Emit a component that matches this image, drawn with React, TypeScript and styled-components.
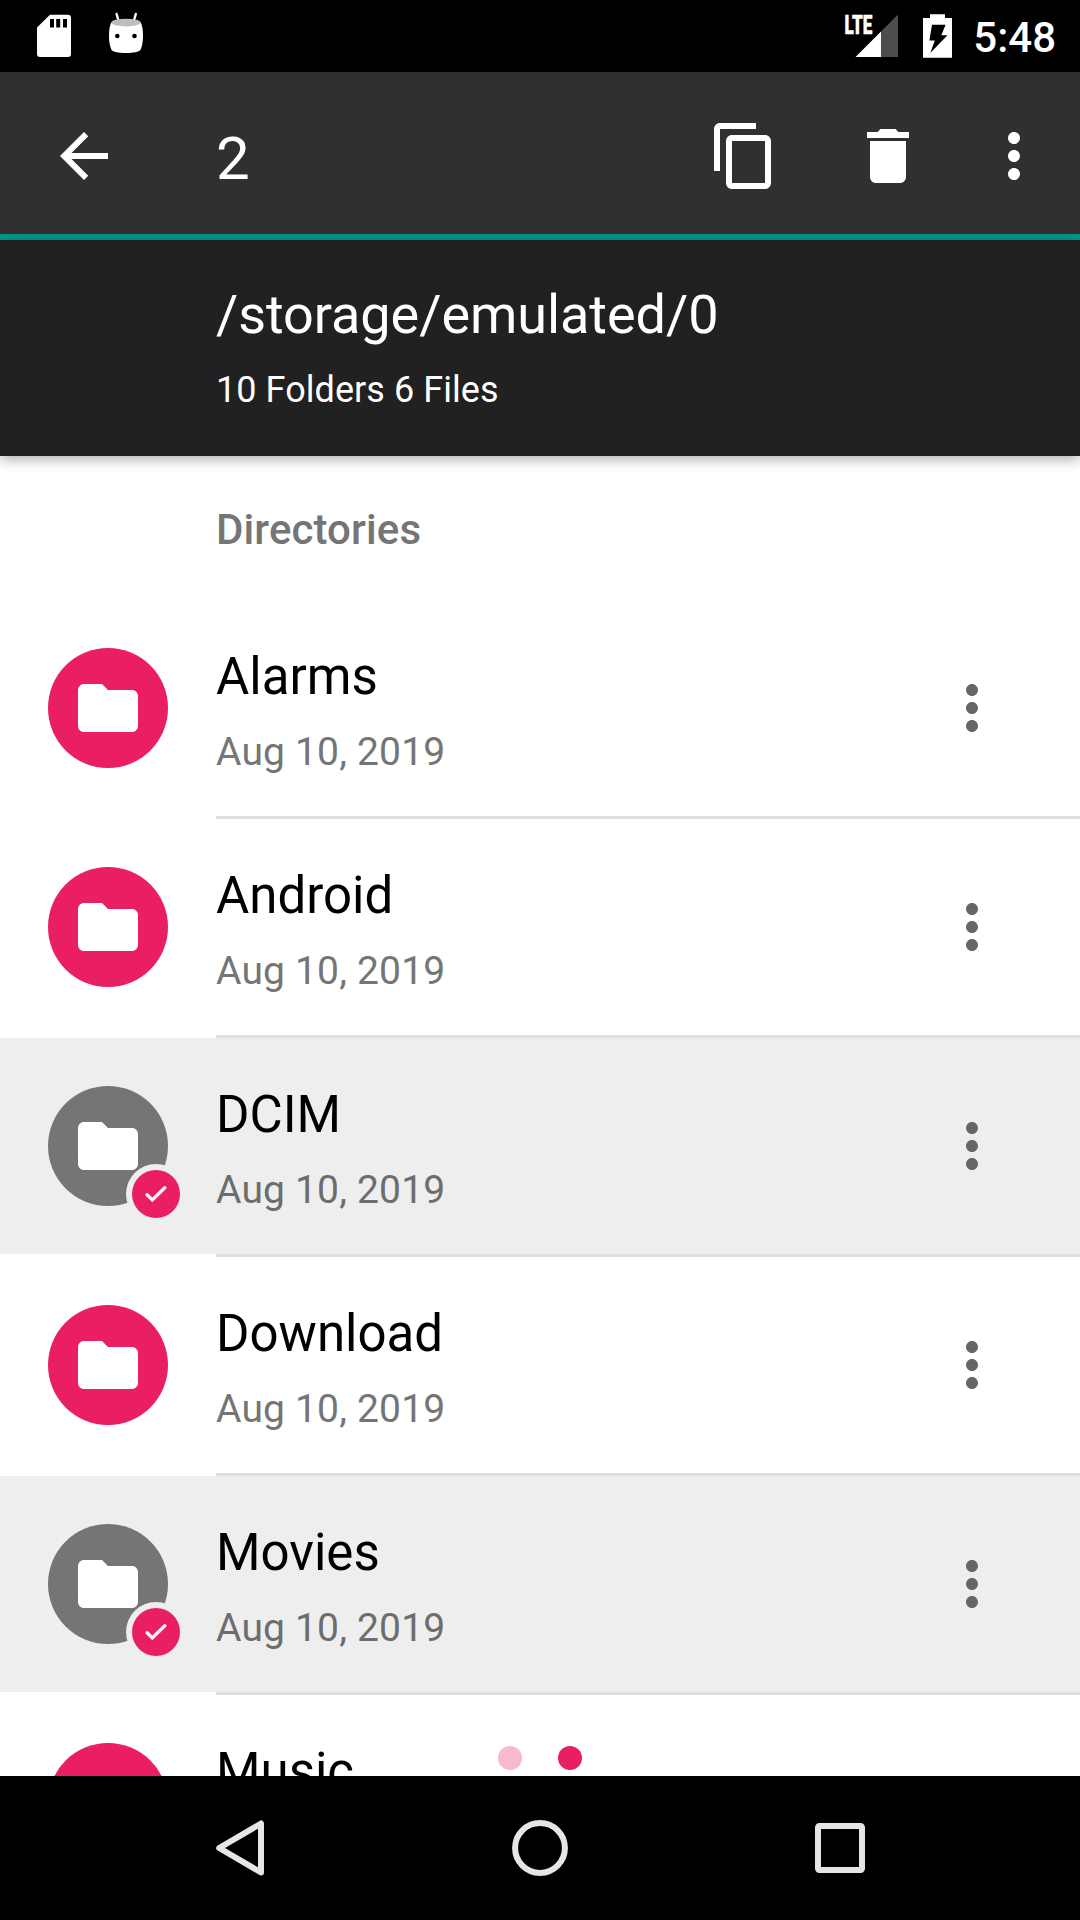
import React from "react";
import styled, { createGlobalStyle } from "styled-components";

const GlobalStyle = createGlobalStyle`
  * { box-sizing: border-box; }
  body { margin: 0; background: #fff; }
  svg { display: block; flex: none; }
`;

const PINK = "#e91e63";

const Screen = styled.div`
  width: 1080px;
  height: 1920px;
  display: flex;
  flex-direction: column;
  overflow: hidden;
  background: #fff;
  font-family: Roboto, "Noto Sans", sans-serif;
`;

const StatusBar = styled.div`
  height: 72px;
  flex: none;
  display: flex;
  align-items: center;
  justify-content: space-between;
  background: #000;
  padding: 0 24px 0 36px;
`;

const StatusGroup = styled.div<{ $gap: number }>`
  display: flex;
  align-items: center;
  gap: ${(p) => p.$gap}px;
`;

const Clock = styled.span`
  margin-left: -4px;
  color: #fff;
  font-size: 42px;
  line-height: 50px;
  font-weight: 500;
  padding-top: 3px;
`;

const Toolbar = styled.header`
  height: 168px;
  flex: none;
  display: flex;
  align-items: center;
  background: #303030;
  border-bottom: 6px solid #009688;
  padding: 6px 30px 0 48px;
`;

const IconButton = styled.button<{ $gapLeft?: number; $color?: string }>`
  width: 72px;
  height: 72px;
  flex: none;
  padding: 0;
  border: 0;
  background: none;
  color: ${(p) => p.$color ?? "#fff"};
  margin-left: ${(p) => p.$gapLeft ?? 0}px;
`;

const SelectionCount = styled.h1`
  flex: 1;
  margin: 0 0 0 96px;
  color: #fff;
  font-size: 60px;
  line-height: 70px;
  font-weight: 400;
  padding-top: 5px;
`;

const PathHeader = styled.section`
  position: relative;
  z-index: 1;
  height: 216px;
  flex: none;
  padding: 43px 0 0 216px;
  background: #212121;
  color: #fff;
  box-shadow: 0 4px 12px rgba(0, 0, 0, 0.3);
`;

const PathTitle = styled.div`
  font-size: 54px;
  line-height: 64px;
  letter-spacing: -0.06px;
`;

const PathSummary = styled.div`
  margin-top: 22px;
  font-size: 36px;
  line-height: 42px;
  letter-spacing: 0.06px;
`;

const Content = styled.main`
  position: relative;
  flex: 1;
  min-height: 0;
  overflow: hidden;
`;

const SectionTitle = styled.h2`
  height: 144px;
  margin: 0;
  padding: 49px 0 0 216px;
  color: #757575;
  font-size: 42px;
  line-height: 50px;
  font-weight: 500;
  letter-spacing: 0.1px;
`;

const Row = styled.div<{ $selected: boolean }>`
  height: 216px;
  display: flex;
  align-items: center;
  padding: 0 72px 0 48px;
  background: ${(p) => (p.$selected ? "#eeeeee" : "#ffffff")};
`;

const Divider = styled.div`
  height: 3px;
  margin-left: 216px;
  background: #e0e0e0;
`;

const Avatar = styled.div<{ $selected: boolean }>`
  position: relative;
  width: 120px;
  height: 120px;
  flex: none;
  display: flex;
  align-items: center;
  justify-content: center;
  border-radius: 50%;
  color: #fff;
  background: ${(p) => (p.$selected ? "#757575" : PINK)};
`;

const CheckBadge = styled.div`
  position: absolute;
  left: 78px;
  top: 78px;
  width: 60px;
  height: 60px;
  border-radius: 50%;
  background: #eee;
  display: flex;
  align-items: center;
  justify-content: center;
`;

const CheckDisc = styled.div`
  width: 48px;
  height: 48px;
  border-radius: 50%;
  background: ${PINK};
  display: flex;
  align-items: center;
  justify-content: center;
`;

const RowText = styled.div`
  flex: 1;
  height: 216px;
  margin-left: 48px;
  padding-top: 47px;
`;

const Name = styled.div`
  color: #000;
  font-size: 51px;
  line-height: 60px;
`;

const DateText = styled.div<{ $selected: boolean }>`
  margin-top: 22px;
  color: ${(p) => (p.$selected ? "#6d6d6d" : "#757575")};
  font-size: 39px;
  line-height: 46px;
  letter-spacing: 0.18px;
`;

const PageDots = styled.div`
  position: absolute;
  left: 0;
  right: 0;
  bottom: 6px;
  display: flex;
  justify-content: center;
  gap: 36px;
`;

const PageDot = styled.span<{ $active: boolean }>`
  width: 24px;
  height: 24px;
  border-radius: 50%;
  background: ${(p) => (p.$active ? PINK : "#f8b9cf")};
`;

const NavBar = styled.nav`
  height: 144px;
  flex: none;
  display: flex;
  justify-content: center;
  background: #000;
`;

const NavButton = styled.button`
  width: 300px;
  height: 144px;
  padding: 0;
  border: 0;
  background: none;
  display: flex;
  align-items: center;
  justify-content: center;
`;

const Icon = ({ d, size = 72 }: { d: string; size?: number }) => (
  <svg width={size} height={size} viewBox="0 0 24 24" fill="currentColor">
    <path d={d} />
  </svg>
);

const ARROW_BACK = "M20 11H7.83l5.59-5.59L12 4l-8 8 8 8 1.41-1.41L7.83 13H20v-2z";
const COPY =
  "M16 1H4c-1.1 0-2 .9-2 2v14h2V3h12V1zm3 4H8c-1.1 0-2 .9-2 2v14c0 1.1.9 2 2 2h11c1.1 0 2-.9 2-2V7c0-1.1-.9-2-2-2zm0 16H8V7h11v14z";
const DELETE = "M6 19c0 1.1.9 2 2 2h8c1.1 0 2-.9 2-2V7H6v12zM19 4h-3.5l-1-1h-5l-1 1H5v2h14V4z";
const MORE =
  "M12 8c1.1 0 2-.9 2-2s-.9-2-2-2-2 .9-2 2 .9 2 2 2zm0 2c-1.1 0-2 .9-2 2s.9 2 2 2 2-.9 2-2-.9-2-2-2zm0 6c-1.1 0-2 .9-2 2s.9 2 2 2 2-.9 2-2-.9-2-2-2z";
const FOLDER =
  "M10 4H4c-1.1 0-1.99.9-1.99 2L2 18c0 1.1.9 2 2 2h16c1.1 0 2-.9 2-2V8c0-1.1-.9-2-2-2h-8l-2-2z";

const SdCardIcon = () => (
  <svg width="36" height="72" viewBox="36 0 36 72">
    <path
      d="M50 14.8H68a3 3 0 0 1 3 3V54a3 3 0 0 1-3 3H40a3 3 0 0 1-3-3V27.4Z"
      fill="#fff"
    />
    <path d="M50 19h4v8.5h-4zM56.2 19h4v8.5h-4zM63 19h4v8.5h-4z" fill="#000" />
  </svg>
);

const AndroidIcon = () => (
  <svg width="36" height="72" viewBox="108 0 36 72">
    <path d="M116.6 14 118.6 21M135.8 14 133.8 21" stroke="#fff" strokeWidth="2.4" strokeLinecap="round" />
    <path
      d="M111.2 22.5C109.3 27 109 31 109 36c0 5.5.8 10.5 2.6 14 1.4 1.9 7 3 14.4 3s13-1.1 14.4-3c1.8-3.5 2.6-8.5 2.6-14 0-5-.3-9-2.2-13.5Z"
      fill="#fff"
    />
    <ellipse cx="126" cy="22.6" rx="14.6" ry="3.9" fill="#bdbdbd" />
    <circle cx="117.3" cy="36" r="2.3" fill="#000" />
    <circle cx="134.5" cy="36" r="2.3" fill="#000" />
  </svg>
);

const SignalIcon = () => (
  <svg width="55" height="72" viewBox="844 0 55 72">
    <path d="M881 31.5 898 14.5V57H881Z" fill="#4d4d4d" />
    <path d="M855.5 57 881 31.5V57Z" fill="#fff" />
    <text
      x="844.4"
      y="33.6"
      textLength="28"
      lengthAdjust="spacingAndGlyphs"
      fontFamily="Roboto, sans-serif"
      fontWeight="900"
      fontSize="26"
      fill="#fff"
      stroke="#fff"
      strokeWidth="0.5"
    >
      LTE
    </text>
  </svg>
);

const BatteryIcon = () => (
  <svg width="30" height="72" viewBox="923 0 30 72">
    <path d="M930 14.2h15V18h7v39.7h-29V18h7Z" fill="#fff" />
    <path d="M932 24.8h13.6L941.3 35.3h6.2L930.3 53 934.8 40.6h-5.4Z" fill="#000" />
  </svg>
);

const CheckIcon = () => (
  <svg width="28" height="28" viewBox="0 0 28 28" fill="none">
    <path d="M5.1 14.8 10.3 19.9 22.8 7.8" stroke="#fff" strokeWidth="3.4" strokeLinecap="round" strokeOpacity=".95" />
  </svg>
);

const rows = [
  { name: "Alarms", date: "Aug 10, 2019", selected: false },
  { name: "Android", date: "Aug 10, 2019", selected: false },
  { name: "DCIM", date: "Aug 10, 2019", selected: true },
  { name: "Download", date: "Aug 10, 2019", selected: false },
  { name: "Movies", date: "Aug 10, 2019", selected: true },
  { name: "Music", date: "Aug 10, 2019", selected: false },
];

export default function App() {
  return (
    <Screen>
      <GlobalStyle />
      <StatusBar>
        <StatusGroup $gap={36}>
          <SdCardIcon />
          <AndroidIcon />
        </StatusGroup>
        <StatusGroup $gap={24}>
          <SignalIcon />
          <BatteryIcon />
          <Clock>5:48</Clock>
        </StatusGroup>
      </StatusBar>
      <Toolbar>
        <IconButton aria-label="Back">
          <Icon d={ARROW_BACK} />
        </IconButton>
        <SelectionCount>2</SelectionCount>
        <IconButton aria-label="Copy">
          <Icon d={COPY} />
        </IconButton>
        <IconButton aria-label="Delete" $gapLeft={72}>
          <Icon d={DELETE} />
        </IconButton>
        <IconButton aria-label="More options" $gapLeft={54}>
          <Icon d={MORE} />
        </IconButton>
      </Toolbar>
      <PathHeader>
        <PathTitle>/storage/emulated/0</PathTitle>
        <PathSummary>10 Folders 6 Files</PathSummary>
      </PathHeader>
      <Content>
        <SectionTitle>Directories</SectionTitle>
        {rows.map((row) => (
          <React.Fragment key={row.name}>
            <Row $selected={row.selected}>
              <Avatar $selected={row.selected}>
                <Icon d={FOLDER} />
                {row.selected && (
                  <CheckBadge>
                    <CheckDisc>
                      <CheckIcon />
                    </CheckDisc>
                  </CheckBadge>
                )}
              </Avatar>
              <RowText>
                <Name>{row.name}</Name>
                <DateText $selected={row.selected}>{row.date}</DateText>
              </RowText>
              <IconButton aria-label={`${row.name} options`} $color="#666">
                <Icon d={MORE} />
              </IconButton>
            </Row>
            <Divider />
          </React.Fragment>
        ))}
        <PageDots>
          <PageDot $active={false} />
          <PageDot $active />
        </PageDots>
      </Content>
      <NavBar>
        <NavButton aria-label="Back">
          <svg width="60" height="60" viewBox="0 0 60 60" fill="none">
            <path d="M51 5.5V54.5L9.2 30Z" stroke="#e6e6e6" strokeWidth="6" strokeLinejoin="round" />
          </svg>
        </NavButton>
        <NavButton aria-label="Home">
          <svg width="60" height="60" viewBox="0 0 60 60" fill="none">
            <circle cx="30" cy="30" r="24.9" stroke="#e6e6e6" strokeWidth="6" />
          </svg>
        </NavButton>
        <NavButton aria-label="Recent apps">
          <svg width="60" height="60" viewBox="0 0 60 60" fill="none">
            <rect x="8" y="8" width="44" height="44" rx="1.5" stroke="#e6e6e6" strokeWidth="6" />
          </svg>
        </NavButton>
      </NavBar>
    </Screen>
  );
}
